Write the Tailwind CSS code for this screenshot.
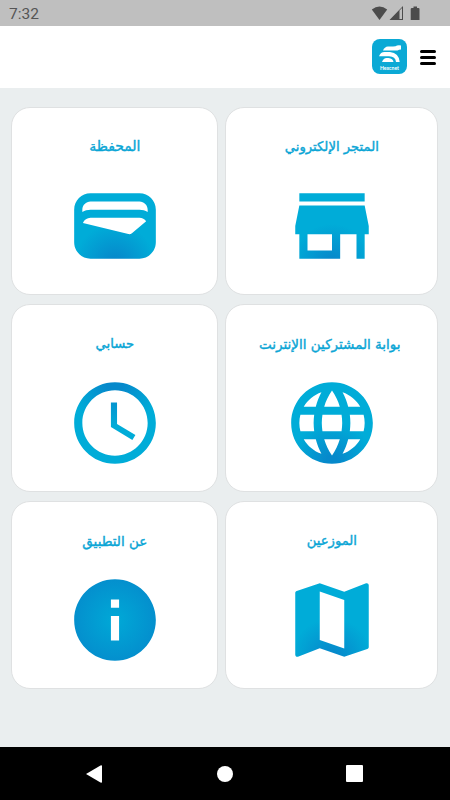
<!DOCTYPE html>
<html lang="ar">
<head>
  <meta charset="UTF-8">
  <meta name="viewport" content="width=device-width, initial-scale=1.0">
  <title>Hexcnet</title>
  <script src="https://cdn.jsdelivr.net/npm/@tailwindcss/browser@4"></script>
</head>
<body class="bg-[#eaeeef] font-['DejaVu_Sans',sans-serif]">
  <!-- Shared gradients -->
  <svg class="absolute w-0 h-0" aria-hidden="true">
    <defs>
      <radialGradient id="bottom" gradientUnits="userSpaceOnUse" cx="12" cy="21.5" r="10">
        <stop offset="0.15" stop-color="#0689cb"/>
        <stop offset="1" stop-color="#00acd8"/>
      </radialGradient>
      <radialGradient id="top" gradientUnits="userSpaceOnUse" cx="12" cy="2" r="11">
        <stop offset="0.2" stop-color="#0689cb"/>
        <stop offset="1" stop-color="#00acd8"/>
      </radialGradient>
      <radialGradient id="center" gradientUnits="userSpaceOnUse" cx="12" cy="12" r="10.5">
        <stop offset="0" stop-color="#00a9d7"/>
        <stop offset="1" stop-color="#048ecd"/>
      </radialGradient>
    </defs>
  </svg>

  <div class="flex h-[800px] w-[450px] flex-col overflow-hidden">
    <!-- Status bar -->
    <div class="flex h-[26px] shrink-0 items-center justify-between bg-[#bfbfbf] pl-[9px] pr-[29px] text-[#555]">
      <span class="pt-[3px] font-[Roboto,sans-serif] text-[15.5px] leading-none">7:32</span>
      <svg class="h-[26px] w-[50px]" viewBox="0 0 50 26" fill="#4c4c4c">
        <path d="M.8 9.500Q8.500 3.500 16.200 9.500L8.500 20Z"/>
        <path d="M18.500 20L32 6V20ZM28.500 10.500V19H31V8Z" fill-rule="evenodd"/>
        <path d="M41 8H42.500V6.500H46V8H47.500Q48.500 8 48.500 9V20H39.700V9Q39.700 8 41 8Z"/>
      </svg>
    </div>

    <!-- Header -->
    <header class="flex h-[62px] shrink-0 items-center justify-end gap-[13px] bg-white pr-[14px] pb-px">
      <svg class="h-[35px] w-[35px]" viewBox="0 0 35 35">
        <rect width="35" height="35" rx="8" fill="#0ba9d5"/>
        <g fill="#fff">
          <path d="M11 11.500Q12.500 7.800 16 7.500H21Q24 7.500 25 6.500Q27 6 29 6.500V10.500Q27 10.500 25.500 11.500H11Z"/>
          <path d="M7 17.300Q8.500 13 12.500 13H18Q27 14 27.700 23H24Q23.500 17.500 17 17.300Z"/>
          <path d="M10 23Q11.500 19 14.500 19H16.500Q21 19.500 21.500 23H10Z"/>
        </g>
        <text x="17.500" y="30.500" text-anchor="middle" fill="#fff" font-family="Lato" font-size="5.800" font-weight="700" textLength="19" lengthAdjust="spacingAndGlyphs">Hexcnet</text>
      </svg>
      <div class="mt-px flex w-4 flex-col gap-[3px]">
        <span class="h-[3px] rounded-full bg-black"></span>
        <span class="h-[3px] rounded-full bg-black"></span>
        <span class="h-[3px] rounded-full bg-black"></span>
      </div>
    </header>

    <!-- Menu cards -->
    <main dir="rtl" class="grid grow grid-cols-[213px_207px] content-start gap-x-[7px] gap-y-[9px] pr-[11.7px] pt-[19.4px] text-[13.2px] [-webkit-text-stroke:0.4px_#0aa5d5] text-[#0aa5d5]">
      <a class="flex h-[188px] flex-col items-center rounded-[19px] border border-[#dfe1e2] bg-white">
        <h2 class="mt-[29px] h-[39.5px] leading-[20px]">المتجر الإلكتروني</h2>
        <svg class="h-[98px] w-[98px]" viewBox="0 0 24 24" fill="url(#bottom)"><path d="M20 4H4v2h16V4zm1 10v-2l-1-5H4l-1 5v2h1v6h10v-6h4v6h2v-6h1zm-9 4H6v-4h6v4z"/></svg>
      </a>
      <a class="flex h-[188px] flex-col items-center rounded-[19px] border border-[#dfe1e2] bg-white">
        <h2 class="mt-[28px] h-[40.5px] text-[14px] leading-[20px]">المحفظة</h2>
        <svg class="h-[98px] w-[98px]" viewBox="0 0 24 24" fill="url(#bottom)"><path d="M18 4H6C3.790 4 2 5.790 2 8v8c0 2.210 1.790 4 4 4h12c2.210 0 4-1.790 4-4V8c0-2.210-1.790-4-4-4zm-1.860 9.770c-.24.2-.57.28-.88.2L4.150 11.250C4.450 10.520 5.160 10 6 10h12c.67 0 1.260.34 1.630.84l-3.490 2.930zM6 6h12c1.100 0 2 .9 2 2v.55c-.59-.34-1.270-.55-2-.55H6c-.73 0-1.410.21-2 .55V8c0-1.100.9-2 2-2z"/></svg>
      </a>
      <a class="flex h-[188px] flex-col items-center rounded-[19px] border border-[#dfe1e2] bg-white">
        <h2 class="mt-[29px] h-[39.5px] pr-1 text-[13.5px] leading-[20px]">بوابة المشتركين االإنترنت</h2>
        <svg class="h-[98px] w-[98px]" viewBox="0 0 24 24" fill="url(#bottom)"><path d="M11.990 2C6.470 2 2 6.480 2 12s4.470 10 9.990 10C17.520 22 22 17.520 22 12S17.520 2 11.990 2zm6.930 6h-2.950c-.32-1.250-.78-2.450-1.380-3.560 1.840.63 3.370 1.910 4.330 3.560zM12 4.040c.83 1.200 1.480 2.530 1.910 3.960h-3.820c.43-1.430 1.080-2.760 1.910-3.960zM4.260 14C4.100 13.360 4 12.690 4 12s.1-1.360.26-2h3.380c-.08.66-.14 1.320-.14 2s.06 1.340.14 2H4.260zm.82 2h2.950c.32 1.250.78 2.450 1.380 3.560-1.840-.63-3.370-1.900-4.330-3.560zm2.950-8H5.080c.96-1.660 2.490-2.930 4.330-3.560C8.810 5.550 8.350 6.750 8.030 8zM12 19.960c-.83-1.200-1.480-2.530-1.910-3.960h3.820c-.43 1.430-1.080 2.760-1.910 3.960zM14.340 14H9.660c-.09-.66-.16-1.320-.16-2s.07-1.350.16-2h4.680c.09.65.16 1.320.16 2s-.07 1.340-.16 2zm.25 5.560c.6-1.110 1.060-2.310 1.380-3.560h2.950c-.96 1.650-2.490 2.930-4.330 3.560zM16.360 14c.08-.66.14-1.320.14-2s-.06-1.340-.14-2h3.380c.16.64.26 1.310.26 2s-.1 1.360-.26 2h-3.380z"/></svg>
      </a>
      <a class="flex h-[188px] flex-col items-center rounded-[19px] border border-[#dfe1e2] bg-white">
        <h2 class="mt-[29px] h-[39.5px] leading-[20px]">حسابي</h2>
        <svg class="h-[98px] w-[98px]" viewBox="0 0 24 24" fill="url(#top)"><path d="M11.990 2C6.470 2 2 6.480 2 12s4.470 10 9.990 10C17.520 22 22 17.520 22 12S17.520 2 11.990 2zM12 20c-4.420 0-8-3.580-8-8s3.580-8 8-8 8 3.580 8 8-3.580 8-8 8zm.5-13H11v6l5.250 3.150.75-1.230-4.500-2.670z"/></svg>
      </a>
      <a class="flex h-[188px] flex-col items-center rounded-[19px] border border-[#dfe1e2] bg-white">
        <h2 class="mt-[29px] h-[39.5px] leading-[20px]">الموزعين</h2>
        <svg class="h-[98px] w-[98px]" viewBox="0 0 24 24" fill="url(#bottom)"><path d="M20.500 3l-.16.03L15 5.100 9 3 3.360 4.900c-.21.07-.36.25-.36.48V20.500c0 .28.22.5.5.5l.16-.03L9 18.900l6 2.100 5.640-1.900c.21-.07.36-.25.36-.48V3.500c0-.28-.22-.5-.5-.5zM15 19l-6-2.110V5l6 2.110V19z"/></svg>
      </a>
      <a class="flex h-[188px] flex-col items-center rounded-[19px] border border-[#dfe1e2] bg-white">
        <h2 class="mt-[29px] h-[39.5px] text-[13.5px] leading-[20px]">عن التطبيق</h2>
        <svg class="h-[98px] w-[98px]" viewBox="0 0 24 24" fill="url(#center)"><path d="M12 2C6.480 2 2 6.480 2 12s4.480 10 10 10 10-4.480 10-10S17.520 2 12 2zm1 15h-2v-6h2v6zm0-8h-2V7h2v2z"/></svg>
      </a>
    </main>

    <!-- Android navigation -->
    <nav class="flex h-[53px] shrink-0 items-center justify-between bg-black pl-[86px] pr-[87px]">
      <svg class="h-[18px] w-4" viewBox="0 0 16 18" fill="#fff"><path d="M0 9L14.500.5Q16 0 16 1V17Q16 18 14.500 17.500Z"/></svg>
      <span class="ml-[2px] h-4 w-4 rounded-full bg-white"></span>
      <span class="h-[17px] w-[17px] rounded-[1px] bg-white"></span>
    </nav>
  </div>
</body>
</html>
